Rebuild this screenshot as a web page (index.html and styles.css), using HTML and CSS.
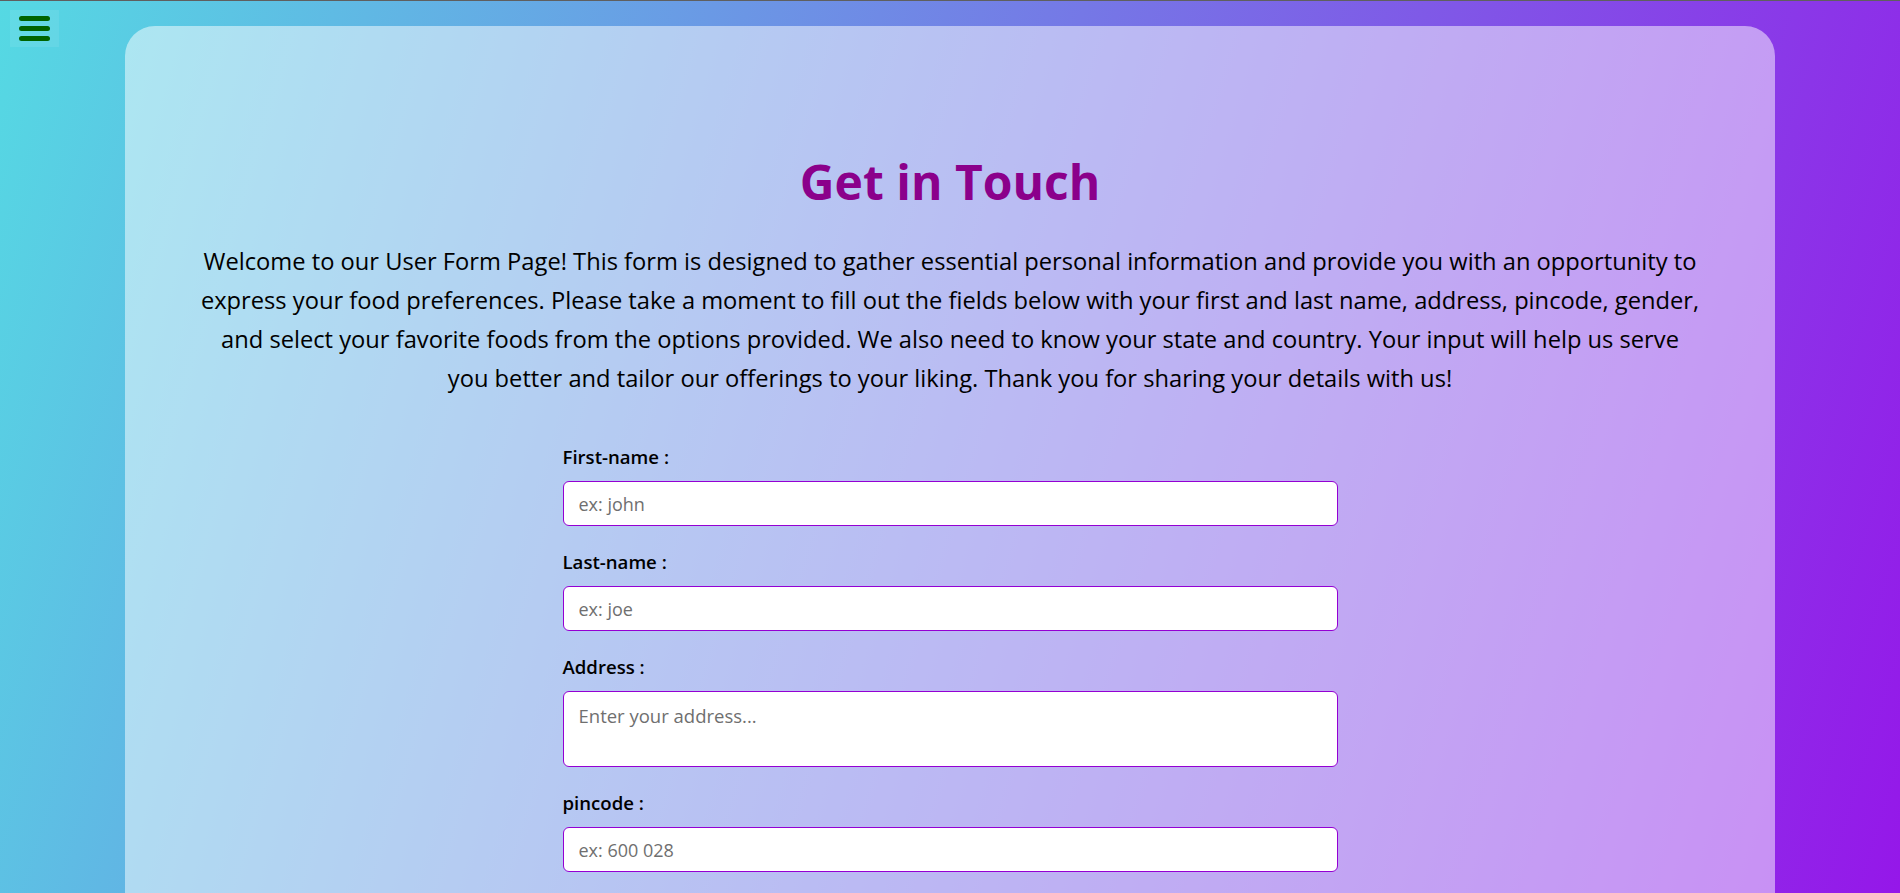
FILE: index.html
```html
<!DOCTYPE html>
<html lang="en">
<head>
<meta charset="utf-8">
<title>Get in Touch</title>
<link rel="stylesheet" href="styles.css">
</head>
<body>
<button class="menu-btn" aria-label="Menu">
  <span class="bar"></span>
  <span class="bar"></span>
  <span class="bar"></span>
</button>
<main class="card">
  <h1 class="title">Get in Touch</h1>
  <p class="intro">Welcome to our User Form Page! This form is designed to gather essential personal information and provide you with an opportunity to<br> express your food preferences. Please take a moment to fill out the fields below with your first and last name, address, pincode, gender,<br> and select your favorite foods from the options provided. We also need to know your state and country. Your input will help us serve<br> you better and tailor our offerings to your liking. Thank you for sharing your details with us!</p>
  <form class="form">
    <label class="label" for="fname">First-name :</label>
    <input class="field" id="fname" type="text" placeholder="ex: john">
    <label class="label" for="lname">Last-name :</label>
    <input class="field" id="lname" type="text" placeholder="ex: joe">
    <label class="label" for="addr">Address :</label>
    <textarea class="field area" id="addr" placeholder="Enter your address..."></textarea>
    <label class="label" for="pin">pincode :</label>
    <input class="field" id="pin" type="text" placeholder="ex: 600 028">
  </form>
</main>
</body>
</html>
```
FILE: styles.css
```css
* { box-sizing: border-box; }

html, body { margin: 0; padding: 0; }

body {
  border-top: 1px solid #5f5f5f;
  min-height: 100vh;
  background: linear-gradient(107deg, #55d9e3 0%, #9517e9 100%);
  background-attachment: fixed;
  font-family: "Open Sans", "Noto Sans", sans-serif;
  color: #000;
}

.menu-btn {
  position: absolute;
  top: 10px;
  left: 10px;
  width: 49px;
  height: 37px;
  padding: 0;
  border: none;
  background: rgba(255, 255, 255, 0.08);
  display: flex;
  flex-direction: column;
  align-items: center;
  justify-content: center;
  gap: 5px;
}

.bar {
  display: block;
  width: 31px;
  height: 5px;
  border-radius: 3px;
  background: #006400;
}

.card {
  width: 1650px;
  margin: 25px auto 0;
  padding: 126px 40px 160px;
  background: rgba(255, 255, 255, 0.5);
  border-radius: 30px;
}

.title {
  margin: 0;
  text-align: center;
  font-size: 48px;
  line-height: 60px;
  font-weight: 700;
  color: #8b008b;
}

.intro {
  max-width: 1540px;
  margin: 30px auto 0;
  text-align: center;
  font-size: 23.7px;
  line-height: 39px;
}

.form {
  width: 775px;
  margin: 47px auto 0;
  display: flex;
  flex-direction: column;
}

.label {
  font-size: 18.6px;
  line-height: 24px;
  font-weight: 600;
  margin-bottom: 12px;
}

.field {
  height: 45px;
  margin-bottom: 24px;
  padding: 0 15px;
  border: 1px solid #9400d3;
  border-radius: 6px;
  background: #fff;
  font-family: inherit;
  font-size: 18px;
  color: #222;
}

.field::placeholder { color: #6f6f6f; }

.area {
  height: 76px;
  padding: 12px 15px 9px;
  resize: none;
  font-size: 18.5px;
  line-height: 24px;
}
```
